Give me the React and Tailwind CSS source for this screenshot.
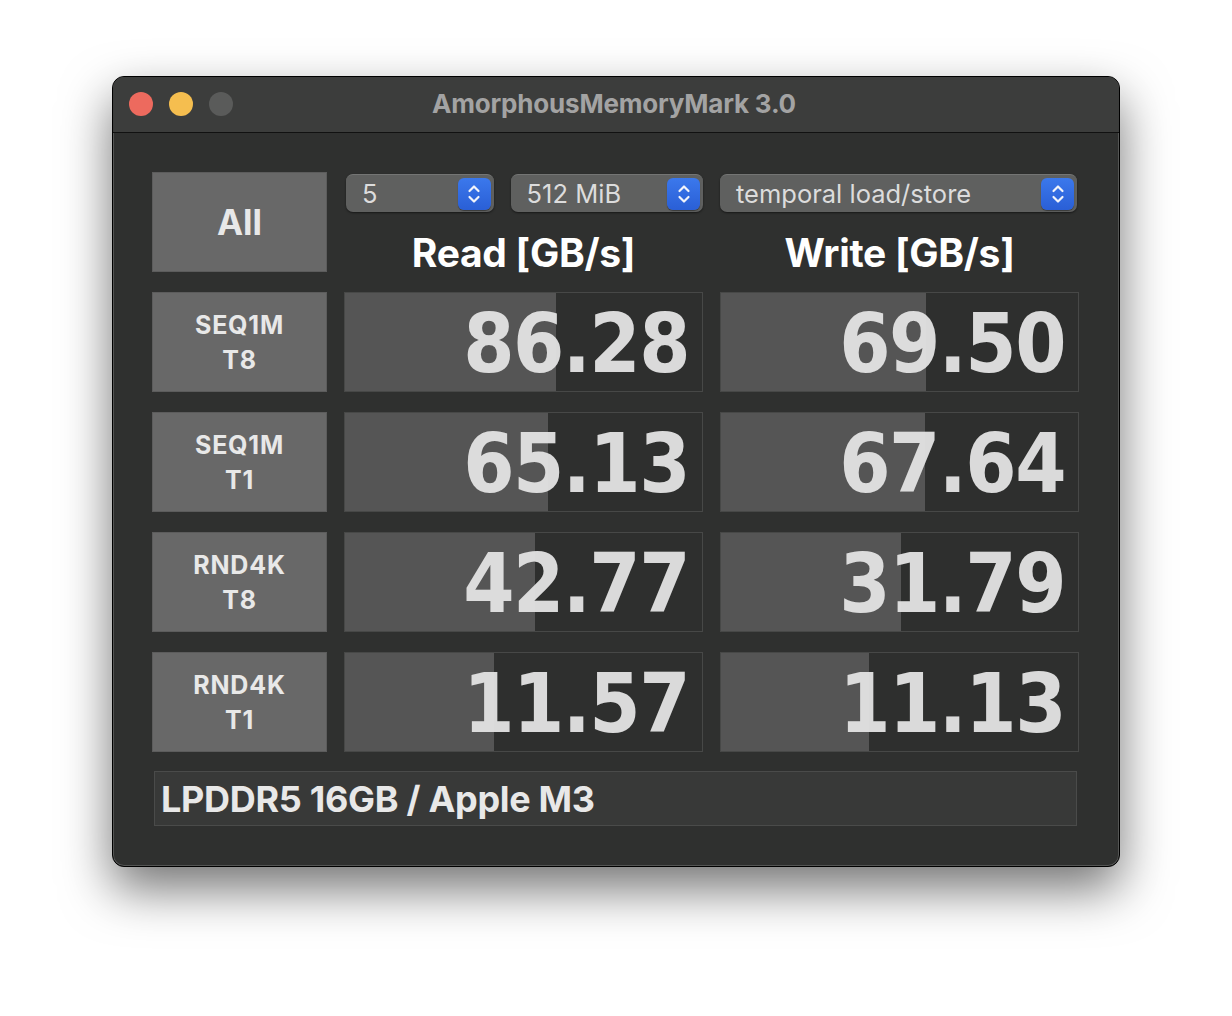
import React from "react";

const rows = [
  { l1: "SEQ1M", l2: "T8", r: "86.28", rw: 211, w: "69.50", ww: 205 },
  { l1: "SEQ1M", l2: "T1", r: "65.13", rw: 203, w: "67.64", ww: 204 },
  { l1: "RND4K", l2: "T8", r: "42.77", rw: 190, w: "31.79", ww: 180 },
  { l1: "RND4K", l2: "T1", r: "11.57", rw: 149, w: "11.13", ww: 148 },
];

const ui = { fontFamily: "Inter, 'Liberation Sans', sans-serif" };
const num = { fontFamily: "'DejaVu Sans Condensed', 'DejaVu Sans', sans-serif" };

function Stepper() {
  return (
    <div className="w-[33px] h-[32px] rounded-[6px] bg-gradient-to-b from-[#3b78ec] to-[#2a5fd6] flex items-center justify-center shadow-[0_1px_1px_rgba(0,0,0,0.4)]">
      <svg width="14" height="22" viewBox="0 0 14 22" fill="none" stroke="#f2f4fa" strokeWidth="2.2" strokeLinecap="round" strokeLinejoin="round">
        <path d="M2.5 8 L7 3.5 L11.5 8" />
        <path d="M2.5 14 L7 18.5 L11.5 14" />
      </svg>
    </div>
  );
}

function Select({ label, className }) {
  return (
    <div className={"h-[38px] rounded-[7px] bg-[#5f605f] border-t border-[#747574] shadow-[0_1px_2px_rgba(0,0,0,0.5)] flex items-center justify-between pl-[16px] pr-[3px] " + className}>
      <span className="text-[25.5px] text-[#dcdcdc] leading-none" style={ui}>{label}</span>
      <Stepper />
    </div>
  );
}

function Cell({ value, width }) {
  return (
    <div className="relative h-[100px] border border-[#474847] bg-[#2e2f2e] flex items-center justify-end pr-[13px] pt-[3px]">
      <div className="absolute left-0 top-0 bottom-0 bg-[#555555]" style={{ width }} />
      <span className="relative text-[82px] font-bold text-[#e4e4e4]/95 leading-none tracking-[-1.5px]" style={num}>{value}</span>
    </div>
  );
}

function Label({ l1, l2 }) {
  return (
    <div className="h-[100px] bg-[#686868] border border-[#5c5c5c] flex flex-col items-center justify-center text-[#e8e8e8] text-[25px] font-bold leading-[35px] tracking-[0.8px] pt-[2px]" style={ui}>
      <span>{l1}</span>
      <span>{l2}</span>
    </div>
  );
}

export default function App() {
  return (
    <div className="w-[1232px] h-[1016px] bg-white pt-[76px] pl-[112px]">
      <div className="w-[1008px] h-[791px] rounded-[12px] border border-black bg-[#2f302f] overflow-hidden shadow-[0_22px_50px_rgba(0,0,0,0.55),inset_0_0_0_1px_rgba(255,255,255,0.18)] flex flex-col">
        <div className="h-[56px] shrink-0 bg-[#3c3d3c] border-b border-[#111] relative flex items-center justify-center">
          <div className="absolute left-[16px] top-[15px] flex gap-[16px]">
            <div className="w-[24px] h-[24px] rounded-full bg-[#ed6a5e]" />
            <div className="w-[24px] h-[24px] rounded-full bg-[#f5be4f]" />
            <div className="w-[24px] h-[24px] rounded-full bg-[#5a5b5a]" />
          </div>
          <span className="text-[26px] font-bold text-[#a3a3a3] tracking-[-0.2px] mr-[4px] mb-[2px]" style={ui}>AmorphousMemoryMark 3.0</span>
        </div>
        <div className="pl-[39px] pt-[39px]">
          <div className="grid grid-cols-[175px_359px_359px] auto-rows-[100px] gap-x-[17px] gap-y-[20px] w-[927px]">
            <div className="h-[100px] bg-[#686868] border border-[#5c5c5c] flex items-center justify-center text-[#e8e8e8] text-[35px] font-bold" style={ui}>All</div>
            <div className="flex flex-col">
              <div className="flex gap-[17px] pt-[2px] pl-[2px]">
                <Select label="5" className="w-[148px]" />
                <Select label="512 MiB" className="w-[193px]" />
              </div>
              <div className="text-center text-[39px] font-bold text-white leading-none mt-[21px] tracking-[-0.3px]" style={ui}>Read [GB/s]</div>
            </div>
            <div className="flex flex-col">
              <div className="flex pt-[2px]">
                <Select label="temporal load/store" className="w-[357px]" />
              </div>
              <div className="text-center text-[39px] font-bold text-white leading-none mt-[21px] tracking-[-0.3px]" style={ui}>Write [GB/s]</div>
            </div>
            {rows.map((r, i) => (
              <React.Fragment key={i}>
                <Label l1={r.l1} l2={r.l2} />
                <Cell value={r.r} width={r.rw} />
                <Cell value={r.w} width={r.ww} />
              </React.Fragment>
            ))}
          </div>
          <div className="mt-[19px] ml-[2px] w-[923px] h-[55px] bg-[#383938] border border-[#4a4b4a] flex items-center pl-[6px]">
            <span className="text-[36px] font-bold text-[#e8e8e8] tracking-[-0.3px]" style={ui}>LPDDR5 16GB / Apple M3</span>
          </div>
        </div>
      </div>
    </div>
  );
}
